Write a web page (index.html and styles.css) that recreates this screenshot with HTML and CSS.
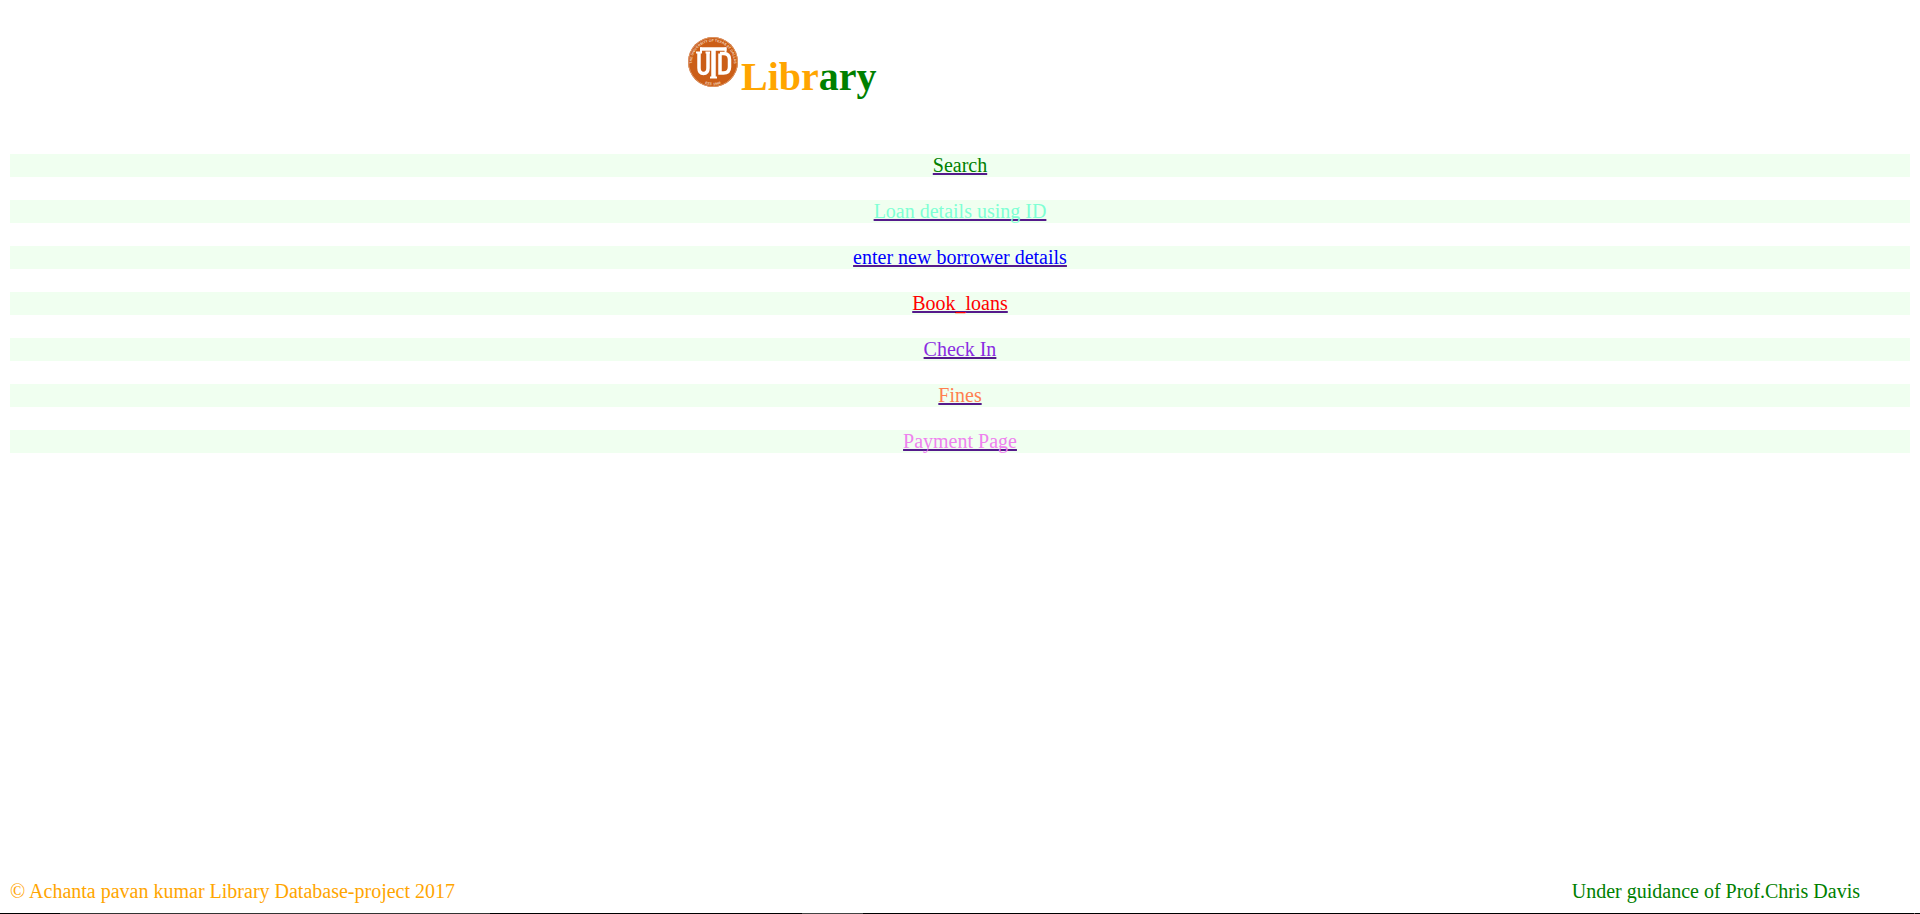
FILE: index.html
```html
<!DOCTYPE html>
<html lang="en">
<head>
<meta charset="utf-8">
<title>Library</title>
<link rel="stylesheet" href="styles.css">
</head>
<body>
<header class="header">
  <svg class="logo" viewBox="0 0 100 100" role="img" aria-label="UTD seal">
    <defs>
      <path id="ring-top" d="M13 71 A42 42 0 1 1 87 71"/>
      <path id="ring-bottom" d="M22 87 A47 47 0 0 0 78 87"/>
    </defs>
    <circle cx="50" cy="50" r="50" fill="#cb5e17"/>
    <circle cx="50" cy="50" r="49" fill="none" stroke="#dc9464" stroke-width="2"/>
    <text class="seal-text"><textPath href="#ring-top" startOffset="50%" text-anchor="middle">THE UNIVERSITY OF TEXAS AT DALLAS</textPath></text>
    <text class="seal-text"><textPath href="#ring-bottom" startOffset="50%" text-anchor="middle">EST. 1969</textPath></text>
    <g fill="none" stroke="#fff">
      <path stroke-width="7" d="M22 31V62Q22 73 31 73Q40 73 40 62V31M64 33V72H71Q83 72 83 60V45Q83 33 71 33H64"/>
      <path stroke-width="4" d="M16 31H28M35 31H44"/>
      <path stroke="#cb5e17" stroke-width="14" d="M51 30V79"/>
      <path stroke-width="9" d="M51 22V82"/>
      <path stroke-width="7" d="M24 24H77"/>
      <path stroke-width="4" d="M26 21V30M75 21V30M44 81H58"/>
    </g>
  </svg>
  <h1 class="title">Libr<span class="title-end">ary</span></h1>
</header>
<nav class="menu">
  <div class="row"><a class="link" href="#search"><span class="green">Search</span></a></div>
  <div class="row"><a class="link" href="#loan"><span class="aquamarine">Loan details using ID</span></a></div>
  <div class="row"><a class="link" href="#borrower"><span class="blue">enter new borrower details</span></a></div>
  <div class="row"><a class="link" href="#book-loans"><span class="red">Book_loans</span></a></div>
  <div class="row"><a class="link" href="#check-in"><span class="blueviolet">Check In</span></a></div>
  <div class="row"><a class="link" href="#fines"><span class="coral">Fines</span></a></div>
  <div class="row"><a class="link" href="#payment"><span class="violet">Payment Page</span></a></div>
</nav>
<footer class="footer">
  <span class="orange">© Achanta pavan kumar Library Database-project 2017</span>
  <span class="green">Under guidance of Prof.Chris Davis</span>
</footer>
<div class="edge"><i class="edge-wide"></i><i class="edge-short"></i><i class="edge-tick"></i></div>
</body>
</html>
```
FILE: styles.css
```css
* { box-sizing: border-box; }
body {
  margin: 0;
  min-height: 100vh;
  display: flex;
  flex-direction: column;
  background: #fff;
  font-family: "Liberation Serif", "Times New Roman", serif;
  font-size: 20px;
  line-height: 23px;
}
.header {
  display: flex;
  gap: 3px;
  padding: 37px 0 48px calc(50% - 272px);
}
.logo { width: 50px; height: 50px; }
.seal-text {
  fill: #f3d2bd;
  font: bold 7px "Liberation Sans", Arial, sans-serif;
}
.title {
  margin: 17px 0 0;
  padding-bottom: 6px;
  color: orange;
  font-size: 40px;
  line-height: 46px;
}
.title-end { color: green; }
.menu {
  display: flex;
  flex-direction: column;
  gap: 23px;
  padding: 0 10px;
  flex: 1;
}
.row { background: honeydew; text-align: center; }
.link {
  color: #551a8b;
  text-decoration: underline;
  text-decoration-skip-ink: none;
}
.green { color: green; }
.aquamarine { color: aquamarine; }
.blue { color: blue; }
.red { color: red; }
.blueviolet { color: blueviolet; }
.coral { color: coral; }
.violet { color: violet; }
.orange { color: orange; }
.footer {
  display: flex;
  justify-content: space-between;
  padding: 0 60px 10px 10px;
}
.edge { display: flex; height: 1px; background: #000; }
.edge-wide { width: 430px; margin-left: 60px; background: #333; }
.edge-short { width: 61px; margin-left: 312px; background: #444; }
.edge-tick { width: 1px; margin: 0 5px 0 auto; background: #666; }
```
